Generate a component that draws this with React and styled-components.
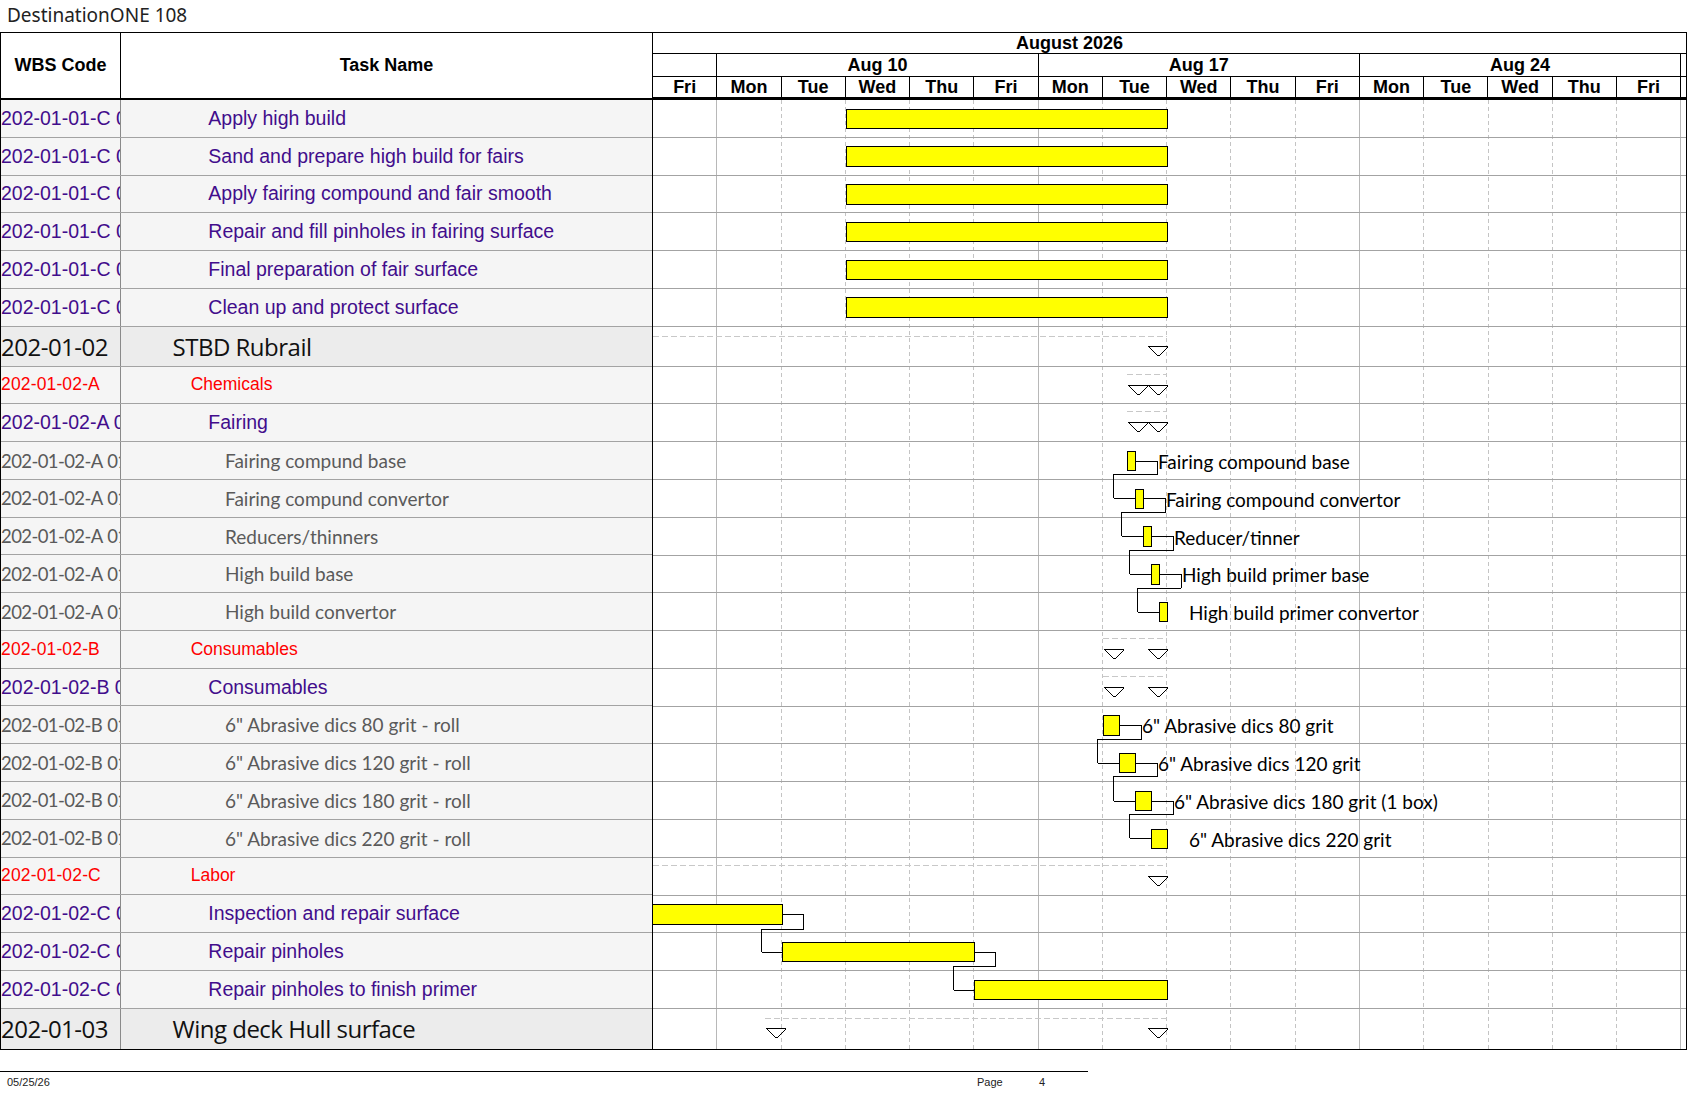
import React from 'react';
import styled, { createGlobalStyle } from 'styled-components';

const D = 64.27;
const HR = D / 8;
const NORMAL = 37.78;
const BIG = 40;

const GlobalStyle = createGlobalStyle`
  html, body { margin: 0; padding: 0; background: #fff; }
  body { width: 1687px; height: 1097px; overflow: hidden; font-family: "Liberation Sans", Arial, sans-serif; }
`;

const rows = [
  { kind: 'purple', wbs: '202-01-01-C 01', name: 'Apply high build', bar: [3 * D, 8 * D] },
  { kind: 'purple', wbs: '202-01-01-C 02', name: 'Sand and prepare high build for fairs', bar: [3 * D, 8 * D] },
  { kind: 'purple', wbs: '202-01-01-C 03', name: 'Apply fairing compound and fair smooth', bar: [3 * D, 8 * D] },
  { kind: 'purple', wbs: '202-01-01-C 04', name: 'Repair and fill pinholes in fairing surface', bar: [3 * D, 8 * D] },
  { kind: 'purple', wbs: '202-01-01-C 05', name: 'Final preparation of fair surface', bar: [3 * D, 8 * D] },
  { kind: 'purple', wbs: '202-01-01-C 06', name: 'Clean up and protect surface', bar: [3 * D, 8 * D] },
  { kind: 'big', wbs: '202-01-02', name: 'STBD Rubrail', summary: [0, 8 * D], tris: [8 * D - 20] },
  { kind: 'red', wbs: '202-01-02-A', name: 'Chemicals', summary: [7 * D + 3 * HR, 8 * D], tris: [7 * D + 3 * HR, 8 * D - 20] },
  { kind: 'purple', wbs: '202-01-02-A 01', name: 'Fairing', summary: [7 * D + 3 * HR, 8 * D], tris: [7 * D + 3 * HR, 8 * D - 20] },
  { kind: 'gray', wbs: '202-01-02-A 01.1', name: 'Fairing compund base', bar: [7 * D + 3 * HR, 7 * D + 4 * HR], label: 'Fairing compound base', link: 'label' },
  { kind: 'gray', wbs: '202-01-02-A 01.2', name: 'Fairing compund convertor', bar: [7 * D + 4 * HR, 7 * D + 5 * HR], label: 'Fairing compound convertor', link: 'label' },
  { kind: 'gray', wbs: '202-01-02-A 01.3', name: 'Reducers/thinners', bar: [7 * D + 5 * HR, 7 * D + 6 * HR], label: 'Reducer/tinner', link: 'label' },
  { kind: 'gray', wbs: '202-01-02-A 01.4', name: 'High build base', bar: [7 * D + 6 * HR, 7 * D + 7 * HR], label: 'High build primer base', link: 'label' },
  { kind: 'gray', wbs: '202-01-02-A 01.5', name: 'High build convertor', bar: [7 * D + 7 * HR, 8 * D], label: 'High build primer convertor' },
  { kind: 'red', wbs: '202-01-02-B', name: 'Consumables', summary: [7 * D, 8 * D], tris: [7 * D, 8 * D - 20] },
  { kind: 'purple', wbs: '202-01-02-B 01', name: 'Consumables', summary: [7 * D, 8 * D], tris: [7 * D, 8 * D - 20] },
  { kind: 'gray', wbs: '202-01-02-B 01.1', name: '6" Abrasive dics 80 grit - roll', bar: [7 * D, 7 * D + 2 * HR], label: '6" Abrasive dics 80 grit', link: 'label' },
  { kind: 'gray', wbs: '202-01-02-B 01.2', name: '6" Abrasive dics 120 grit - roll', bar: [7 * D + 2 * HR, 7 * D + 4 * HR], label: '6" Abrasive dics 120 grit', link: 'label' },
  { kind: 'gray', wbs: '202-01-02-B 01.3', name: '6" Abrasive dics 180 grit - roll', bar: [7 * D + 4 * HR, 7 * D + 6 * HR], label: '6" Abrasive dics 180 grit (1 box)', link: 'label' },
  { kind: 'gray', wbs: '202-01-02-B 01.4', name: '6" Abrasive dics 220 grit - roll', bar: [7 * D + 6 * HR, 8 * D], label: '6" Abrasive dics 220 grit' },
  { kind: 'red', wbs: '202-01-02-C', name: 'Labor', summary: [0, 8 * D], tris: [8 * D - 20] },
  { kind: 'purple', wbs: '202-01-02-C 01', name: 'Inspection and repair surface', bar: [-10, 2 * D], link: 'plain' },
  { kind: 'purple', wbs: '202-01-02-C 02', name: 'Repair pinholes', bar: [2 * D, 5 * D], link: 'plain' },
  { kind: 'purple', wbs: '202-01-02-C 03', name: 'Repair pinholes to finish primer', bar: [5 * D, 8 * D] },
  { kind: 'big', wbs: '202-01-03', name: 'Wing deck Hull surface', summary: [112, 8 * D], tris: [112, 8 * D - 20] },
];

const days = ['Fri', 'Mon', 'Tue', 'Wed', 'Thu', 'Fri', 'Mon', 'Tue', 'Wed', 'Thu', 'Fri', 'Mon', 'Tue', 'Wed', 'Thu', 'Fri'];

const Page = styled.div`
  width: 1687px;
  height: 1097px;
  display: flex;
  flex-direction: column;
`;

const Title = styled.div`
  height: 32px;
  box-sizing: border-box;
  padding: 2px 0 0 7px;
  font-family: "Noto Sans", sans-serif;
  font-size: 19px;
  line-height: 26px;
  color: #222;
`;

const Sheet = styled.div`
  display: flex;
  width: 1687px;
  box-sizing: border-box;
  border: 1px solid #000;
`;

const LeftPane = styled.div`
  width: 651px;
  flex: none;
  display: flex;
  flex-direction: column;
`;

const LeftHeader = styled.div`
  display: grid;
  grid-template-columns: 120px 531px;
  height: 67px;
  box-sizing: border-box;
  border-bottom: 2px solid #000;
`;

const HeadCell = styled.div`
  display: flex;
  align-items: center;
  justify-content: center;
  font-weight: bold;
  font-size: 18px;
  color: #000;
  box-sizing: border-box;
  border-right: ${p => (p.$sep ? '1px solid #000' : 'none')};
`;

const fonts = {
  big: { family: '"Open Sans", sans-serif', size: 24, color: '#111', pad: 51.5, ls: -0.5, wsize: 24, wls: -0.5, wws: 0 },
  red: { family: '"Liberation Sans", Arial, sans-serif', size: 17.5, color: '#ff0000', pad: 69.7, ls: 0, wsize: 17.5, wls: 0.15, wws: 0 },
  purple: { family: '"Liberation Sans", Arial, sans-serif', size: 19.5, color: '#420d8c', pad: 87.3, ls: 0, wsize: 19.5, wls: 0, wws: 0 },
  gray: { family: 'Lato, sans-serif', size: 19, color: '#5a5a5a', pad: 104, ls: 0, wsize: 18.5, wls: -0.6, wws: 1 },
};

const Row = styled.div`
  display: grid;
  grid-template-columns: 120px 531px;
  height: ${p => (p.$kind === 'big' ? BIG : NORMAL)}px;
  box-sizing: border-box;
  border-bottom: 1px solid #a3a3a3;
  background: ${p => (p.$kind === 'big' ? '#ececec' : '#f5f5f5')};
  font-family: ${p => fonts[p.$kind].family};
  color: ${p => fonts[p.$kind].color};
  &:last-child { border-bottom: none; }
`;

const WbsCell = styled.div`
  display: flex;
  align-items: center;
  white-space: nowrap;
  overflow: hidden;
  box-sizing: border-box;
  border-right: 1px solid #8a8a8a;
  font-size: ${p => fonts[p.$kind].wsize}px;
  letter-spacing: ${p => fonts[p.$kind].wls}px;
  word-spacing: ${p => fonts[p.$kind].wws}px;
`;

const NameCell = styled.div`
  display: flex;
  align-items: center;
  white-space: nowrap;
  overflow: hidden;
  padding-left: ${p => fonts[p.$kind].pad}px;
  font-size: ${p => fonts[p.$kind].size}px;
  letter-spacing: ${p => fonts[p.$kind].ls}px;
`;

const ChartPane = styled.div`
  flex: 1;
  display: flex;
  flex-direction: column;
  border-left: 1px solid #000;
  min-width: 0;
`;

const MonthRow = styled.div`
  height: 21px;
  box-sizing: border-box;
  border-bottom: 1px solid #000;
  display: flex;
  align-items: center;
  padding-left: 363px;
  font-weight: bold;
  font-size: 18px;
  line-height: 1;
  white-space: nowrap;
`;

const WeekRow = styled.div`
  height: 23px;
  box-sizing: border-box;
  border-bottom: 1px solid #000;
  display: grid;
  grid-template-columns: ${D}px ${5 * D}px ${5 * D}px ${5 * D}px 1fr;
`;

const DayRow = styled.div`
  height: 23px;
  box-sizing: border-box;
  border-bottom: 3px solid #000;
  display: grid;
  grid-template-columns: repeat(16, ${D}px) 1fr;
`;

const ScaleCell = styled.div`
  box-sizing: border-box;
  border-right: ${p => (p.$last ? 'none' : '1px solid #000')};
  display: flex;
  align-items: center;
  justify-content: center;
  font-weight: bold;
  font-size: 18px;
  line-height: 1;
  white-space: nowrap;
`;

const ChartSvg = styled.svg`
  display: block;
`;

const ChartLabel = styled.text`
  font-family: Lato, sans-serif;
  font-size: 19px;
  fill: #000;
`;

const Footer = styled.div`
  margin-top: 21px;
  width: 1088px;
  box-sizing: border-box;
  border-top: 1px solid #000;
  padding: 4px 0 0 7px;
  display: grid;
  grid-template-columns: 970px 62px auto;
  font-family: "Liberation Sans", Arial, sans-serif;
  font-size: 11px;
  color: #222;
`;

const r = v => Math.round(v) + 0.5;

function Chart() {
  let acc = 0;
  const tops = rows.map(row => {
    const t = acc;
    acc += row.kind === 'big' ? BIG : NORMAL;
    return t;
  });
  const total = acc;
  const W = 1033;
  const els = [];

  for (let i = 1; i <= 16; i++) {
    const x = Math.round(i * D) - 0.5;
    const week = i === 1 || i === 6 || i === 11 || i === 16;
    els.push(
      <line key={'v' + i} x1={x} x2={x} y1={0} y2={total} stroke={week ? '#b8b8b8' : '#c4c4c4'} strokeDasharray={week ? undefined : '4 3'} />
    );
  }
  rows.forEach((row, i) => {
    const h = row.kind === 'big' ? BIG : NORMAL;
    if (i < rows.length - 1) {
      const y = Math.round(tops[i] + h) - 0.5;
      els.push(<line key={'h' + i} x1={0} x2={W} y1={y} y2={y} stroke="#a3a3a3" />);
    }
  });

  rows.forEach((row, i) => {
    const top = tops[i];
    const big = row.kind === 'big';
    if (row.summary) {
      const dy = r(top + (big ? 9 : 7));
      els.push(<line key={'sd' + i} x1={row.summary[0]} x2={row.summary[1]} y1={dy} y2={dy} stroke="#c8c8c8" strokeDasharray="6 3" />);
      const ty = r(top + (big ? 19.5 : 18));
      row.tris.forEach((tx, k) => {
        const x = Math.round(tx) + 0.5;
        els.push(<polygon key={'t' + i + k} points={`${x},${ty} ${x + 20},${ty} ${x + 10},${ty + 9.5}`} fill="#fff" stroke="#000" />);
      });
    }
    if (row.bar) {
      const [x0, x1] = row.bar;
      const y0 = Math.round(top + 8.5);
      const y1 = Math.round(top + 28);
      const cy = r(top + 18.4);
      const next = rows[i + 1];
      const nTop = tops[i + 1];
      if (row.label) {
        const tx = Math.round(x1) + 22;
        if (row.link === 'label') {
          const nx = Math.round(next.bar[0]);
          const ly = r(top + 32);
          const ncy = r(nTop + 18.4);
          els.push(<path key={'l' + i} d={`M${Math.round(x1) + 0.5},${cy} H${tx + 0.5} V${ly} H${nx - 21.5} V${ncy} H${nx + 0.5}`} fill="none" stroke="#000" />);
          els.push(<ChartLabel key={'tl' + i} x={tx + 1} y={top + 26.8}>{row.label}</ChartLabel>);
        } else {
          els.push(<ChartLabel key={'tl' + i} x={tx} y={top + 26.8}>{row.label}</ChartLabel>);
        }
      } else if (row.link === 'plain') {
        const nx = Math.round(next.bar[0]);
        const bx = Math.round(x1);
        const ly = r(top + 33);
        const ncy = r(nTop + 18.4);
        els.push(<path key={'l' + i} d={`M${bx + 0.5},${cy} H${bx + 21.5} V${ly} H${nx - 20.5} V${ncy} H${nx + 0.5}`} fill="none" stroke="#000" />);
      }
      els.push(
        <rect key={'b' + i} x={Math.round(x0) + 0.5} y={y0 + 0.5} width={Math.round(x1) - Math.round(x0)} height={y1 - y0} fill="#ffff00" stroke="#000" />
      );
    }
  });

  return (
    <ChartSvg width={W} height={total} viewBox={`0 0 ${W} ${total}`} shapeRendering="crispEdges">
      {els}
    </ChartSvg>
  );
}

export default function App() {
  return (
    <Page>
      <GlobalStyle />
      <Title>DestinationONE 108</Title>
      <Sheet>
        <LeftPane>
          <LeftHeader>
            <HeadCell $sep>WBS Code</HeadCell>
            <HeadCell>Task Name</HeadCell>
          </LeftHeader>
          {rows.map((row, i) => (
            <Row key={i} $kind={row.kind}>
              <WbsCell $kind={row.kind}>{row.wbs}</WbsCell>
              <NameCell $kind={row.kind}>{row.name}</NameCell>
            </Row>
          ))}
        </LeftPane>
        <ChartPane>
          <MonthRow>August 2026</MonthRow>
          <WeekRow>
            <ScaleCell />
            <ScaleCell>Aug 10</ScaleCell>
            <ScaleCell>Aug 17</ScaleCell>
            <ScaleCell>Aug 24</ScaleCell>
            <ScaleCell $last />
          </WeekRow>
          <DayRow>
            {days.map((d, i) => (
              <ScaleCell key={i}>{d}</ScaleCell>
            ))}
            <ScaleCell $last />
          </DayRow>
          <Chart />
        </ChartPane>
      </Sheet>
      <Footer>
        <span>05/25/26</span>
        <span>Page</span>
        <span>4</span>
      </Footer>
    </Page>
  );
}
